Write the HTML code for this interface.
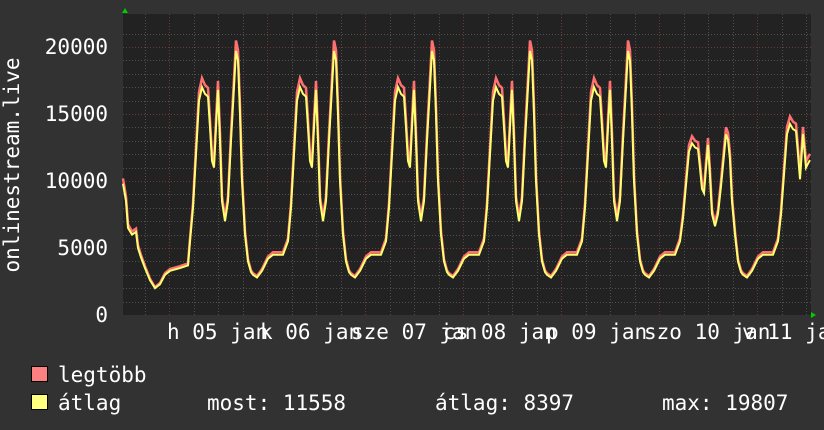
<!DOCTYPE html>
<html><head><meta charset="utf-8"><style>
html,body{margin:0;padding:0;background:#323232;width:824px;height:430px;overflow:hidden}
svg{display:block}
text{font-family:"DejaVu Sans Mono","Liberation Mono",monospace;font-size:21px;fill:#fff}
</style></head><body>
<svg id="g" width="824" height="430" xmlns="http://www.w3.org/2000/svg">
<rect x="0" y="0" width="824" height="430" fill="#323232"/>
<rect x="123" y="14" width="688" height="301" fill="#222"/>
<g id="grid"></g>
<g id="data"></g>
<polygon points="122,13 125,8 128,13" fill="#0c0"/>
<polygon points="811,312 816,315 811,318" fill="#0c0"/>
<g text-anchor="end">
<text x="108" y="54">20000</text>
<text x="108" y="121">15000</text>
<text x="108" y="188">10000</text>
<text x="108" y="255">5000</text>
<text x="108" y="322">0</text>
</g>
<text transform="translate(19,165) rotate(-90)" text-anchor="middle">onlinestream.live</text>
<g>
<text x="167" y="339">h 05 jan</text>
<text x="260" y="339">k 06 jan</text>
<text x="351" y="339">sze 07 jan</text>
<text x="443" y="339">cs 08 jan</text>
<text x="546" y="339">p 09 jan</text>
<text x="644" y="339">szo 10 jan</text>
<text x="742" y="339">v 11 jan</text>
</g>
<rect x="31.5" y="366.5" width="16" height="15" fill="#ff8080" stroke="#000"/>
<rect x="31.5" y="394.5" width="16" height="15" fill="#ffff80" stroke="#000"/>
<text x="58" y="382">legtöbb</text>
<text x="58" y="410">átlag</text>
<text x="207" y="410">most: 11558</text>
<text x="435" y="410">átlag: 8397</text>
<text x="662" y="410">max: 19807</text>
</svg>
<script>
var NS="http://www.w3.org/2000/svg";
var grid=document.getElementById("grid");
function line(x1,y1,x2,y2,c){var l=document.createElementNS(NS,"line");l.setAttribute("x1",x1);l.setAttribute("y1",y1);l.setAttribute("x2",x2);l.setAttribute("y2",y2);l.setAttribute("stroke",c);l.setAttribute("stroke-width",1);l.setAttribute("stroke-dasharray","1,2");grid.appendChild(l);}
function Y(v){return 315-v*0.0134;}
for(var v=1000;v<=21000;v+=1000){var y=Math.round(Y(v))+0.5;line(123,y,811,y,v%5000==0?"#6a3a3a":"#505050");}
for(var x=169-24.5;x<811;x+=24.5){var xx=Math.round(x)+0.5;var maj=Math.abs(((x-169)/98)-Math.round((x-169)/98))<0.01;if(xx>123)line(xx,14,xx,315,maj?"#6a3a3a":"#505050");}
var pts=[[123,9800],[126,8500],[128,6500],[132,6000],[136,6200],[138,5000],[141,4300],[145,3500],[150,2600],[155,2000],[160,2300],[165,3000],[170,3300],[180,3500],[188,3700]];
var T=[[0,3000],[4,2800],[9,3300],[15,4200],[20,4500],[30,4500],[35,5500],[38,8000],[41,12000],[44,16000],[47,17000],[50,16500],[53,16300],[55,14000],[57,11500],[59,11000],[61,14000],[63,16800],[65,13000],[67,8500],[70,7000],[73,8500],[76,13000],[79,17000],[81,19700],[83,19000],[85,15000],[87,10000],[90,6000],[93,4000],[96,3200]];
var scale=[1,1,1,1,1,0.62,0.75,0.75];
for(var k=-1;k<7;k++){var L=253+98*(k);var s=scale[k+1];
 T.forEach(function(p){var x=L+p[0];var v=p[1];if(v>6000)v=6000+(v-6000)*s;if(k==4&&p[0]>=76&&p[0]<=83)v=v*0.93;if(x>188&&x<=800)pts.push([x,v]);});}
pts.push([803,13500],[806,11000],[808,11300],[810,11558]);
function path(f){return pts.map(function(p,i){return (i?"L":"M")+p[0]+","+Y(f(p[1])).toFixed(1)}).join("");}
var d=document.getElementById("data");
var r=document.createElementNS(NS,"path");r.setAttribute("d",path(function(v){return v*1.04}));r.setAttribute("fill","none");r.setAttribute("stroke","#ff7070");r.setAttribute("stroke-width","2.5");d.appendChild(r);
var yl=document.createElementNS(NS,"path");yl.setAttribute("d",path(function(v){return v}));yl.setAttribute("fill","none");yl.setAttribute("stroke","#ffff70");yl.setAttribute("stroke-width","2");d.appendChild(yl);
</script>
</body></html>
